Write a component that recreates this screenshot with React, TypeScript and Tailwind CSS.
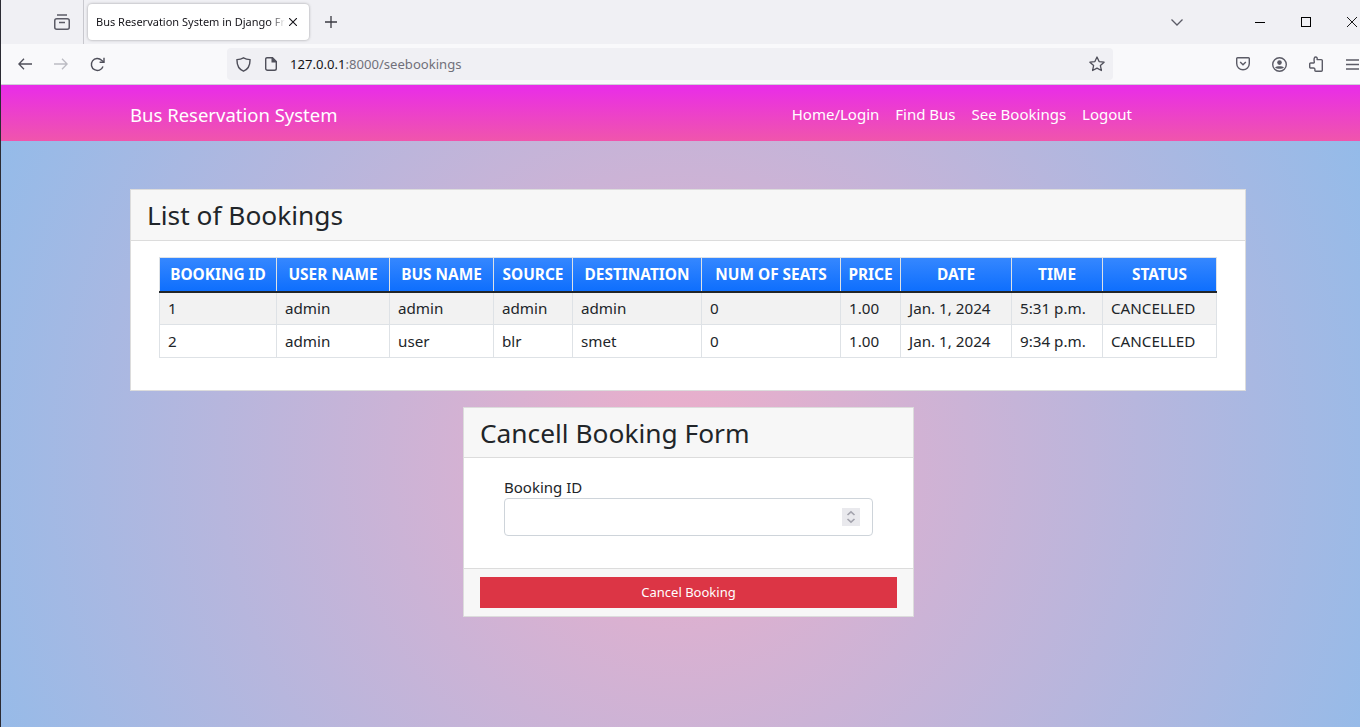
import React from 'react';

const columns = [
  { label: 'BOOKING ID', width: 'w-[117px]' },
  { label: 'USER NAME', width: 'w-[113px]' },
  { label: 'BUS NAME', width: 'w-[104px]' },
  { label: 'SOURCE', width: 'w-[79px]' },
  { label: 'DESTINATION', width: 'w-[129px]' },
  { label: 'NUM OF SEATS', width: 'w-[139px]' },
  { label: 'PRICE', width: 'w-[60px]' },
  { label: 'DATE', width: 'w-[111px]' },
  { label: 'TIME', width: 'w-[91px]' },
  { label: 'STATUS', width: 'w-[114px]' },
];

const bookings = [
  ['1', 'admin', 'admin', 'admin', 'admin', '0', '1.00', 'Jan. 1, 2024', '5:31 p.m.', 'CANCELLED'],
  ['2', 'admin', 'user', 'blr', 'smet', '0', '1.00', 'Jan. 1, 2024', '9:34 p.m.', 'CANCELLED'],
];

const BrowserChrome = () => (
  <div className="text-[#15141a]">
    <div className="h-[44px] bg-[#f0f0f4] flex items-center">
      <div className="w-[83px] h-full flex items-center justify-end pr-[13px] border-r border-[#c8c8ce]">
        <svg width="16" height="16" viewBox="0 0 16 16" fill="none" stroke="#5b5b66" strokeWidth="1.5">
          <rect x="0.75" y="4.75" width="14.5" height="10.5" rx="2" />
          <path d="M3 1h10M5 8.5h6" />
        </svg>
      </div>
      <div className="ml-[4px] w-[221px] h-[36px] bg-white rounded-[4px] shadow-[0_0_3px_rgba(0,0,0,0.35)] flex items-center pl-[8px]">
        <span className="text-[11px] mt-[1px] w-[189px] overflow-hidden whitespace-nowrap [mask-image:linear-gradient(to_right,black_92%,transparent)]">Bus Reservation System in Django Fr</span>
        <svg className="ml-[4px]" width="8" height="8" viewBox="0 0 8 8" stroke="#15141a" strokeWidth="1.1"><path d="M0 0l8 8M8 0L0 8" /></svg>
      </div>
      <svg className="ml-[16px]" width="12" height="12" viewBox="0 0 12 12" stroke="#3a3a42" strokeWidth="1.3"><path d="M6 0v12M0 6h12" /></svg>
      <svg className="ml-[834px]" width="12" height="7" viewBox="0 0 12 7" fill="none" stroke="#5b5b66" strokeWidth="1.3"><path d="M0.5 0.5L6 6l5.5-5.5" /></svg>
      <svg className="ml-[72px]" width="10" height="10" viewBox="0 0 10 10" stroke="#000" strokeWidth="1"><path d="M0 5.5h10" /></svg>
      <svg className="ml-[36px]" width="10" height="10" viewBox="0 0 10 10" fill="none" stroke="#000" strokeWidth="1"><rect x="0.5" y="0.5" width="9" height="9" /></svg>
      <svg className="ml-[36px]" width="10" height="10" viewBox="0 0 10 10" stroke="#000" strokeWidth="0.9"><path d="M0 0l10 10M10 0L0 10" /></svg>
    </div>
    <div className="h-[41px] bg-[#f9f9fb] border-b border-[#cfcfd8] flex items-center">
      <svg className="ml-[17px]" width="14" height="12" viewBox="0 0 14 12" fill="none" stroke="#4f4f5a" strokeWidth="1.3"><path d="M14 6H1M6 0.7L0.9 6 6 11.3" /></svg>
      <svg className="ml-[22px]" width="14" height="12" viewBox="0 0 14 12" fill="none" stroke="#bcbcc3" strokeWidth="1.3"><path d="M0 6h13M8 0.7L13.1 6 8 11.3" /></svg>
      <svg className="ml-[22px]" width="15" height="15" viewBox="0 0 15 15" fill="none" stroke="#4f4f5a" strokeWidth="1.4"><path d="M13 9.5A6 6 0 1 1 11.6 3.2L13.8 5" /><path d="M14 0.8V5.3H9.6" /></svg>
      <div className="ml-[122px] w-[886px] h-[32px] bg-[#f0f0f4] rounded-[4px] flex items-center pl-[9px] pr-[8px]">
        <svg width="15" height="15" viewBox="0 0 15 15" fill="none" stroke="#4f4f5a" strokeWidth="1.4"><path d="M7.5 0.8C9.5 2 11.5 2.5 14 2.6C14.2 8 12 12.3 7.5 14.2C3 12.3 0.8 8 1 2.6C3.5 2.5 5.5 2 7.5 0.8z" /></svg>
        <svg className="ml-[14px]" width="12" height="14" viewBox="0 0 12 14" fill="none" stroke="#4f4f5a" strokeWidth="1.4"><path d="M2 0.7H7.5L11.3 4.5V11.5A1.8 1.8 0 0 1 9.5 13.3H2.5A1.8 1.8 0 0 1 0.7 11.5V2A1.3 1.3 0 0 1 2 0.7z" /><path d="M7.2 0.7V4.8H11.3" fill="#4f4f5a" /></svg>
        <span className="ml-[13px] mt-[1px] text-[13.1px] whitespace-nowrap">127.0.0.1<span className="text-[#70707a]">:8000/seebookings</span></span>
        <svg className="ml-auto" width="16" height="16" viewBox="0 0 16 16" fill="none" stroke="#4f4f5a" strokeWidth="1.3"><path d="M8 1l2.1 4.6 5 .6-3.7 3.4 1 4.9L8 12.1 3.6 14.500l1-4.9L.9 6.200l5-.6z" strokeLinejoin="round" /></svg>
      </div>
      <div className="ml-[123px] flex items-center text-[#5b5b66]">
        <svg width="14" height="14" viewBox="0 0 14 14" fill="none" stroke="currentColor" strokeWidth="1.4"><path d="M1.500 0.800h11a0.800 0.800 0 0 1 .8 .8v4.900a6.300 6.300 0 0 1-12.600 0V1.600a0.800 0.800 0 0 1 .8-.8z" /><path d="M4.200 5l2.800 2.800L9.800 5" /></svg>
        <svg className="ml-[22px]" width="15" height="15" viewBox="0 0 15 15" fill="none"><circle cx="7.5" cy="7.5" r="6.8" stroke="currentColor" strokeWidth="1.4" /><circle cx="7.5" cy="5.6" r="2.3" fill="currentColor" /><path d="M3 10.400C4.500 8.800 10.500 8.800 12 10.400C10.500 12.200 4.500 12.200 3 10.400z" fill="currentColor" /></svg>
        <svg className="ml-[22px]" width="14" height="16" viewBox="0 0 14 16" fill="none" stroke="currentColor" strokeWidth="1.4" strokeLinejoin="round"><path d="M6.500 1c1.400 0 2 1 1.600 2.600h4.200a1 1 0 0 1 1 1v9.700a1 1 0 0 1-1 1H6.800a1 1 0 0 1-1-1c.5-1.600-.3-2.300-1.400-2.300H1.700a1 1 0 0 1-1-1V8a1 1 0 0 1 1-1h2.900c.5-.1.800-.5.700-1C4.800 3.500 5 1 6.500 1z" /></svg>
        <svg className="ml-[23px]" width="13" height="11" viewBox="0 0 13 11" stroke="currentColor" strokeWidth="1.3"><path d="M0 1h13M0 5.500h13M0 10h13" /></svg>
      </div>
    </div>
  </div>
);

const Navbar = () => (
  <nav className="h-[56px] pl-[129px] pr-[228px] flex items-center text-white bg-[linear-gradient(180deg,#e92ce9,#f055ac)]">
    <span className="text-[18.5px] mt-[3px]">Bus Reservation System</span>
    <ul className="ml-auto flex gap-[16px] text-[15px] mt-[3px]">
      <li>Home/Login</li>
      <li>Find Bus</li>
      <li>See Bookings</li>
      <li>Logout</li>
    </ul>
  </nav>
);

const BookingsTable = () => (
  <table className="table-fixed border-collapse w-[1057px] text-[15.2px] text-[#212529]">
    <thead>
      <tr className="h-[34px] text-white text-[15.4px] bg-[linear-gradient(180deg,#3587ff,#0d6efd)]">
        {columns.map((c) => (
          <th key={c.label} className={`${c.width} p-0 font-bold text-center border-x border-t border-[#dee2e6] border-b-2 border-b-[#212529] whitespace-nowrap`}>
            {c.label}
          </th>
        ))}
      </tr>
    </thead>
    <tbody>
      {bookings.map((row, i) => (
        <tr key={row[0]} className={i === 0 ? 'h-[33px] bg-[#f2f2f2]' : 'h-[33px] bg-white'}>
          {row.map((cell, j) => (
            <td key={j} className="px-[8px] py-0 border border-[#dee2e6] whitespace-nowrap">{cell}</td>
          ))}
        </tr>
      ))}
    </tbody>
  </table>
);

export default function App() {
  return (
    <div className="w-[1360px] h-[727px] overflow-hidden flex flex-col border-l border-[#2b2b33] font-['Noto_Sans',sans-serif]">
      <BrowserChrome />
      <Navbar />
      <main className="flex-1 pt-[48px] pl-[129px] flex flex-col items-start bg-[radial-gradient(circle_at_679px_320px,#eeaeca_0%,#94bbe9_100%)]">
        <section className="w-[1116px] h-[202px] bg-white border border-[#dcdcdc]">
          <div className="h-[51px] bg-[#f7f7f7] border-b border-[#dcdcdc] pl-[16px] pt-[2px] flex items-center text-[26.3px] text-[#212529]">List of Bookings</div>
          <div className="pt-[16px] pl-[28px]">
            <BookingsTable />
          </div>
        </section>
        <section className="mt-[16px] ml-[333px] w-[451px] h-[210px] bg-white border border-[#dcdcdc] flex flex-col">
          <div className="h-[50px] bg-[#f7f7f7] border-b border-[#dcdcdc] pl-[16px] pt-[2px] flex items-center text-[26.3px] text-[#212529]">Cancell Booking Form</div>
          <div className="flex-1 pt-[18px] pl-[40px] pr-[40px]">
            <label className="block text-[15px] leading-[22px] text-[#212529]">Booking ID</label>
            <div className="h-[38px] border border-[#ced4da] rounded-[4px] flex items-center justify-end pr-[12px]">
              <div className="w-[18px] h-[18px] bg-[#e9e9ed] flex items-center justify-center">
                <svg width="10" height="14" viewBox="0 0 10 14" fill="none" stroke="#a3a3ad" strokeWidth="1.6"><path d="M1.500 5L5 1.800 8.500 5M1.500 9L5 12.200 8.500 9" /></svg>
              </div>
            </div>
          </div>
          <div className="h-[48px] bg-[#f7f7f7] border-t border-[#dcdcdc] px-[16px] pt-[8px]">
            <button className="w-full h-[31px] pt-[1px] bg-[#dc3545] text-white text-[13px]">Cancel Booking</button>
          </div>
        </section>
      </main>
    </div>
  );
}
